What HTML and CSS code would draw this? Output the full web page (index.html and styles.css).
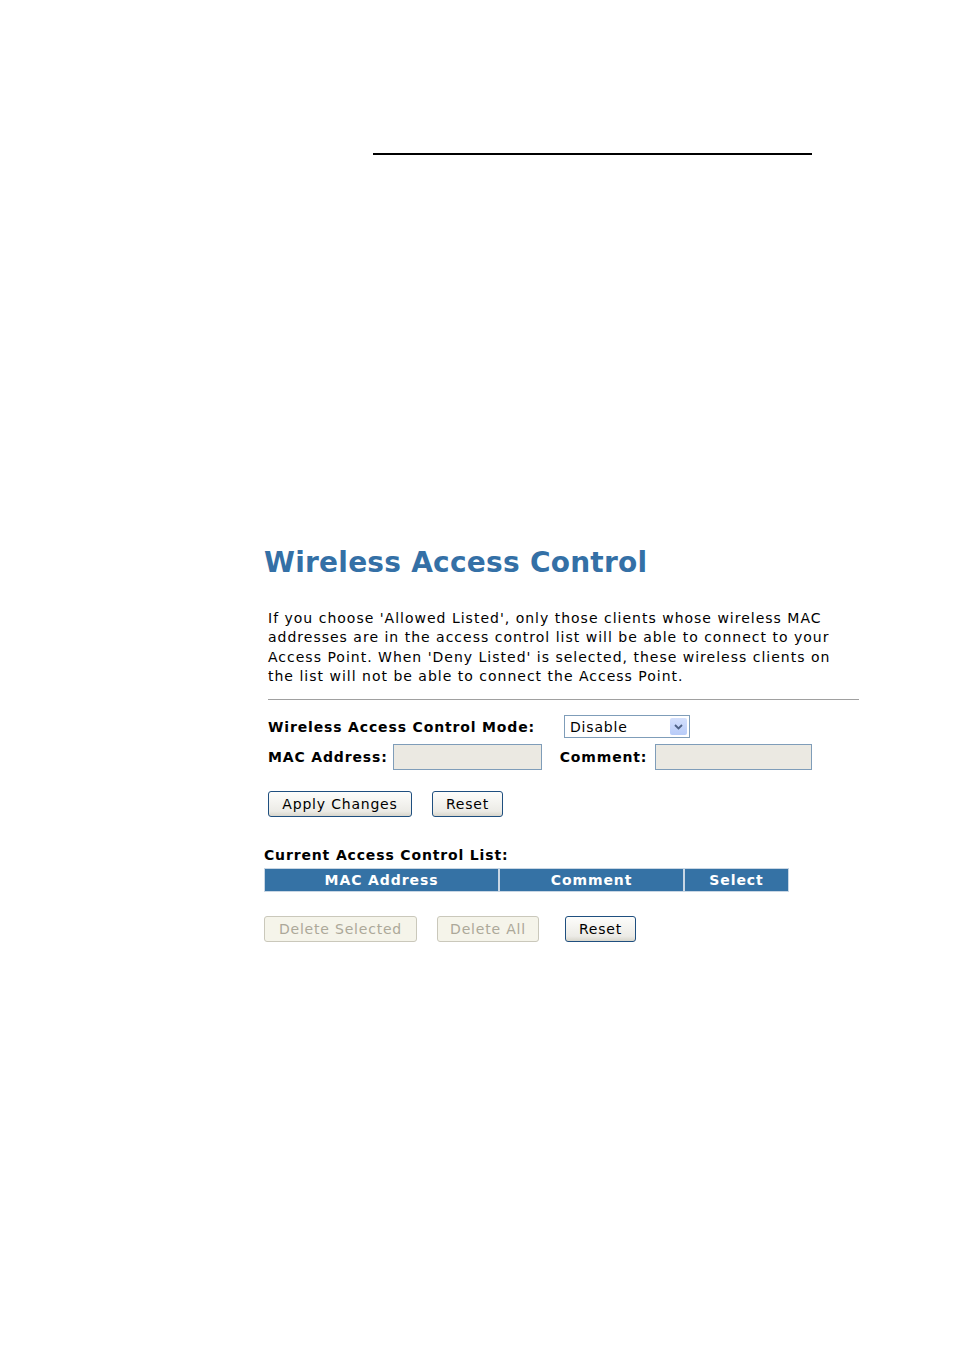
FILE: index.html
```html
<!DOCTYPE html>
<html>
<head>
<meta charset="utf-8">
<link rel="stylesheet" href="styles.css">
</head>
<body>
<div class="topline"></div>
<div class="page">
  <h1 class="title">Wireless Access Control</h1>
  <p class="intro">If you choose 'Allowed Listed', only those clients whose wireless MAC<br>addresses are in the access control list will be able to connect to your<br>Access Point. When 'Deny Listed' is selected, these wireless clients on<br>the list will not be able to connect the Access Point.</p>
  <div class="rule"></div>
  <div class="row row-mode">
    <span class="label">Wireless Access Control Mode:</span>
    <div class="select"><span class="select-text">Disable</span><span class="select-btn"><svg width="9" height="6" viewBox="0 0 9 6"><path d="M1 1 L4.5 4.5 L8 1" fill="none" stroke="#4d6185" stroke-width="1.8"/></svg></span></div>
  </div>
  <div class="row row-mac">
    <span class="label">MAC Address:</span>
    <span class="input input-mac"></span>
    <span class="label label-comment">Comment:</span>
    <span class="input input-comment"></span>
  </div>
  <div class="btnrow btnrow-1">
    <button class="btn btn-apply">Apply Changes</button>
    <button class="btn btn-reset1">Reset</button>
  </div>
  <div class="list-title">Current Access Control List:</div>
  <div class="thead">
    <div class="th th-mac">MAC Address</div>
    <div class="th th-comment">Comment</div>
    <div class="th th-select">Select</div>
  </div>
  <div class="btnrow btnrow-2">
    <button class="btn btn-disabled btn-delsel">Delete Selected</button>
    <button class="btn btn-disabled btn-delall">Delete All</button>
    <button class="btn btn-reset2">Reset</button>
  </div>
</div>
</body>
</html>
```
FILE: styles.css
```css
html, body {
  margin: 0;
  padding: 0;
  background: #ffffff;
}
body {
  width: 954px;
  height: 1350px;
  font-family: "DejaVu Sans", Verdana, sans-serif;
  color: #000;
}
.topline {
  margin: 153px 0 0 373px;
  width: 439px;
  height: 2px;
  background: #000;
}
.page {
  padding-left: 264px;
  padding-top: 390px;
}
.title {
  margin: 0;
  font-size: 28px;
  font-weight: bold;
  color: #3470a6;
  line-height: 36px;
  letter-spacing: 0.25px;
}
.intro {
  margin: 28px 0 0 4px;
  width: 620px;
  font-size: 14px;
  line-height: 19.4px;
  letter-spacing: 1px;
}
.rule {
  margin: 12px 0 0 4px;
  width: 591px;
  height: 1px;
  background: #a0a0a0;
}
.row {
  display: flex;
  align-items: center;
  margin-left: 4px;
}
.row-mode {
  margin-top: 15px;
  height: 24px;
}
.label {
  font-size: 14px;
  font-weight: bold;
  letter-spacing: 0.85px;
}
.select {
  margin-left: 29px;
  width: 124px;
  height: 21px;
  border: 1px solid #7f9db9;
  display: flex;
  align-items: center;
  justify-content: space-between;
  background: #fff;
}
.select-text {
  font-size: 14px;
  padding-left: 5px;
  letter-spacing: 0.8px;
}
.select-btn {
  width: 17px;
  height: 17px;
  margin-right: 2px;
  background: linear-gradient(#d4e0fc, #b7cbf8);
  border-radius: 2px;
  display: flex;
  align-items: center;
  justify-content: center;
}
.row-mac {
  margin-top: 5px;
  height: 26px;
}
.input {
  display: block;
  background: #ebe9e2;
  border: 1px solid #7f9db9;
  box-sizing: border-box;
  height: 26px;
}
.input-mac {
  margin-left: 5px;
  width: 149px;
}
.label-comment {
  margin-left: 18px;
}
.input-comment {
  margin-left: 8px;
  width: 157px;
}
.btnrow {
  display: flex;
  align-items: center;
}
.btnrow-1 {
  margin: 21px 0 0 4px;
}
.btn {
  font-family: "DejaVu Sans", Verdana, sans-serif;
  font-size: 14px;
  letter-spacing: 0.8px;
  height: 26px;
  padding: 0;
  border: 1px solid #1f4f7f;
  border-radius: 3px;
  background: linear-gradient(#fdfdfb, #ecebe6 80%, #d8d6cc);
  color: #000;
  box-sizing: border-box;
}
.btn-apply { width: 144px; }
.btn-reset1 { width: 71px; margin-left: 20px; }
.list-title {
  margin-top: 28px;
  font-size: 14px;
  font-weight: bold;
  line-height: 20px;
  letter-spacing: 0.85px;
}
.thead {
  display: flex;
  margin: 4px 0 0 1px;
  gap: 2px;
}
.th {
  height: 22px;
  background: #3572a5;
  color: #fff;
  font-size: 14px;
  font-weight: bold;
  letter-spacing: 0.9px;
  text-align: center;
  line-height: 22px;
  box-shadow: 0 0 0 1px #c8d6e4;
}
.th-mac { width: 233px; }
.th-comment { width: 183px; }
.th-select { width: 103px; }
.btnrow-2 {
  margin-top: 25px;
}
.btn-disabled {
  border-color: #cac8bb;
  color: #aca899;
  background: #f5f4ea;
}
.btn-delsel { width: 153px; }
.btn-delall { width: 102px; margin-left: 20px; }
.btn-reset2 { width: 71px; margin-left: 26px; }
```
